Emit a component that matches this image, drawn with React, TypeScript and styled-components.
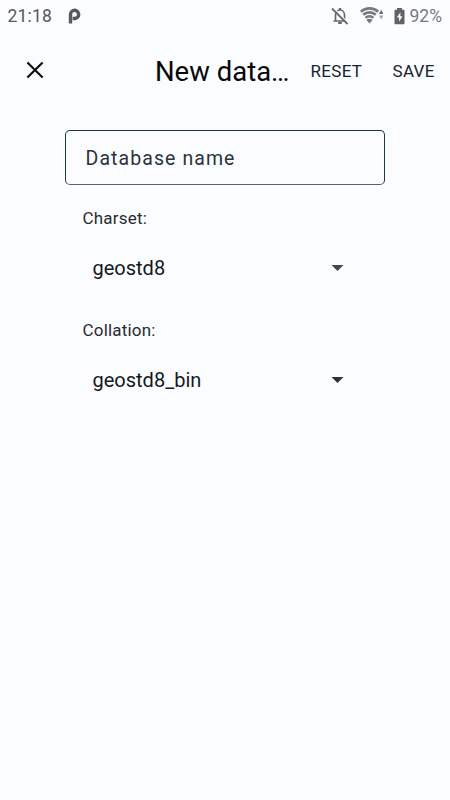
import React from "react";
import styled, { createGlobalStyle } from "styled-components";

const GlobalStyle = createGlobalStyle`
  * { box-sizing: border-box; }
  body { margin: 0; background: #fbfcff; }
`;

const Screen = styled.main`
  display: flex;
  flex-direction: column;
  width: 450px;
  height: 800px;
  overflow: hidden;
  background: #fbfcff;
  color: #16181b;
  font-family: Roboto, "Liberation Sans", sans-serif;
`;

const StatusBar = styled.div`
  display: flex;
  align-items: center;
  height: 32px;
  padding: 0 7.5px 0 7.5px;
  color: #56585a;
`;

const Clock = styled.span`
  width: 60.5px;
  font-size: 17.5px;
  line-height: 32px;
  letter-spacing: 0.2px;
`;

const Indicators = styled.div`
  display: flex;
  align-items: center;
  margin-left: auto;
`;

const Battery = styled.span`
  width: 33px;
  margin-left: 4.5px;
  color: #77797b;
  font-size: 17.5px;
  line-height: 32px;
  white-space: nowrap;
`;

const Glyph = styled.svg<{ $gap?: number }>`
  display: block;
  flex: none;
  margin-left: ${(p) => p.$gap ?? 0}px;
`;

const Toolbar = styled.header`
  display: flex;
  align-items: center;
  height: 78px;
  padding-left: 25px;
`;

const IconButton = styled.button`
  display: flex;
  margin-top: -2px;
  padding: 0;
  border: 0;
  background: none;
`;

const Title = styled.h1`
  width: 155.5px;
  margin: 1px 0 0 110px;
  color: #08090a;
  font-size: 27.5px;
  font-weight: 400;
  line-height: 36px;
  white-space: nowrap;
`;

const Action = styled.button<{ $width: number }>`
  width: ${(p) => p.$width}px;
  flex: none;
  margin-top: -1px;
  padding: 0;
  border: 0;
  background: none;
  color: #15232c;
  font: 400 17px/24px Roboto, sans-serif;
  letter-spacing: 0.3px;
  text-align: left;
  white-space: nowrap;
`;

const Form = styled.form`
  display: flex;
  flex-direction: column;
  width: 320px;
  margin: 20px 0 0 65px;
`;

const NameInput = styled.input`
  height: 55px;
  padding: 1px 20px 0 19.5px;
  border: 1px solid #173a4b;
  border-bottom-color: #53636f;
  border-radius: 5px;
  outline: none;
  background: transparent;
  color: #2a343a;
  font: 400 19.5px/24px Roboto, sans-serif;
  letter-spacing: 1.08px;
  &::placeholder { color: #2a343a; opacity: 1; }
`;

const Field = styled.div`
  height: 112px;
  padding: 21px 41px 0 17.5px;
`;

const Label = styled.div`
  color: #2a2b2e;
  font-size: 17px;
  line-height: 24px;
  letter-spacing: 0.2px;
`;

const Select = styled.div`
  display: flex;
  align-items: center;
  justify-content: space-between;
  height: 28px;
  margin-top: 24px;
  padding-left: 10px;
  font-size: 20px;
  line-height: 28px;
`;

const Caret = ({ color }: { color: string }) => (
  <Glyph width="13" height="9" viewBox="0 0 13 9">
    <path d="M0.5 1h12l-6 6z" fill={color} />
  </Glyph>
);

const fields = [
  { label: "Charset:", value: "geostd8", caret: "#46474c" },
  { label: "Collation:", value: "geostd8_bin", caret: "#303136" },
];

export default function App() {
  return (
    <Screen>
      <GlobalStyle />
      <StatusBar>
        <Clock>21:18</Clock>
        <Glyph width="13" height="16" viewBox="0 0 13 16">
          <path
            d="M2.5 15.5V6.2a4.1 4.1 0 1 1 4.1 4.3H4.7"
            fill="none"
            stroke="#56585a"
            strokeWidth="3.4"
          />
        </Glyph>
        <Indicators>
          <Glyph width="18" height="18" viewBox="0 0 18 18" fill="none" stroke="#65676a">
            <path d="M4.5 14V8a4.5 5 0 0 1 9 0v6M2.5 14h13" strokeWidth="1.7" />
            <path d="M9 1v2" strokeWidth="2.4" />
            <path d="M7.2 16h3.6" strokeWidth="2" />
            <path d="M2.3.8 17.2 16" stroke="#fbfcff" strokeWidth="1.3" />
            <path d="M1 1.5 16.5 17" strokeWidth="1.8" />
          </Glyph>
          <Glyph $gap={11} width="25" height="18" viewBox="0 0 25 18" fill="none" stroke="#77797b">
            <path d="M.8 4.7a13 13 0 0 1 17.4 0M3.2 7.8a9.3 9.3 0 0 1 12.6 0M5.6 10.8a5.5 5.5 0 0 1 7.8 0" strokeWidth="2.6" />
            <path d="M6.4 13a4.2 4.2 0 0 1 6.2 0L9.5 16.5z" fill="#77797b" stroke="none" />
            <path d="M19 6.9 21.2 2.8l2.2 4.1z" fill="#696b6e" stroke="none" />
            <path d="M19 8.4h4.4l-2.2 4.1z" fill="#a4a6a9" stroke="none" />
          </Glyph>
          <Glyph $gap={9} width="11" height="17" viewBox="0 0 11 17">
            <path d="M3 0h5v1.7h1.5c.6 0 1 .4 1 1v12.6c0 .6-.4 1-1 1h-8c-.6 0-1-.4-1-1V2.7c0-.6.4-1 1-1H3z" fill="#606265" />
            <path d="M6.5 4.2 2.8 9.5h2.3v4.2l3.3-5.4H6.3z" fill="#fbfcff" />
          </Glyph>
          <Battery>92%</Battery>
        </Indicators>
      </StatusBar>
      <Toolbar>
        <IconButton aria-label="Close">
          <Glyph width="20" height="20" viewBox="0 0 20 20">
            <path d="m2.4 2.4 15.2 15.2M17.6 2.4 2.4 17.6" stroke="#08090a" strokeWidth="2.1" />
          </Glyph>
        </IconButton>
        <Title>New data…</Title>
        <Action $width={82}>RESET</Action>
        <Action $width={50}>SAVE</Action>
      </Toolbar>
      <Form>
        <NameInput placeholder="Database name" aria-label="Database name" />
        {fields.map((f) => (
          <Field key={f.label}>
            <Label>{f.label}</Label>
            <Select>
              <span>{f.value}</span>
              <Caret color={f.caret} />
            </Select>
          </Field>
        ))}
      </Form>
    </Screen>
  );
}
